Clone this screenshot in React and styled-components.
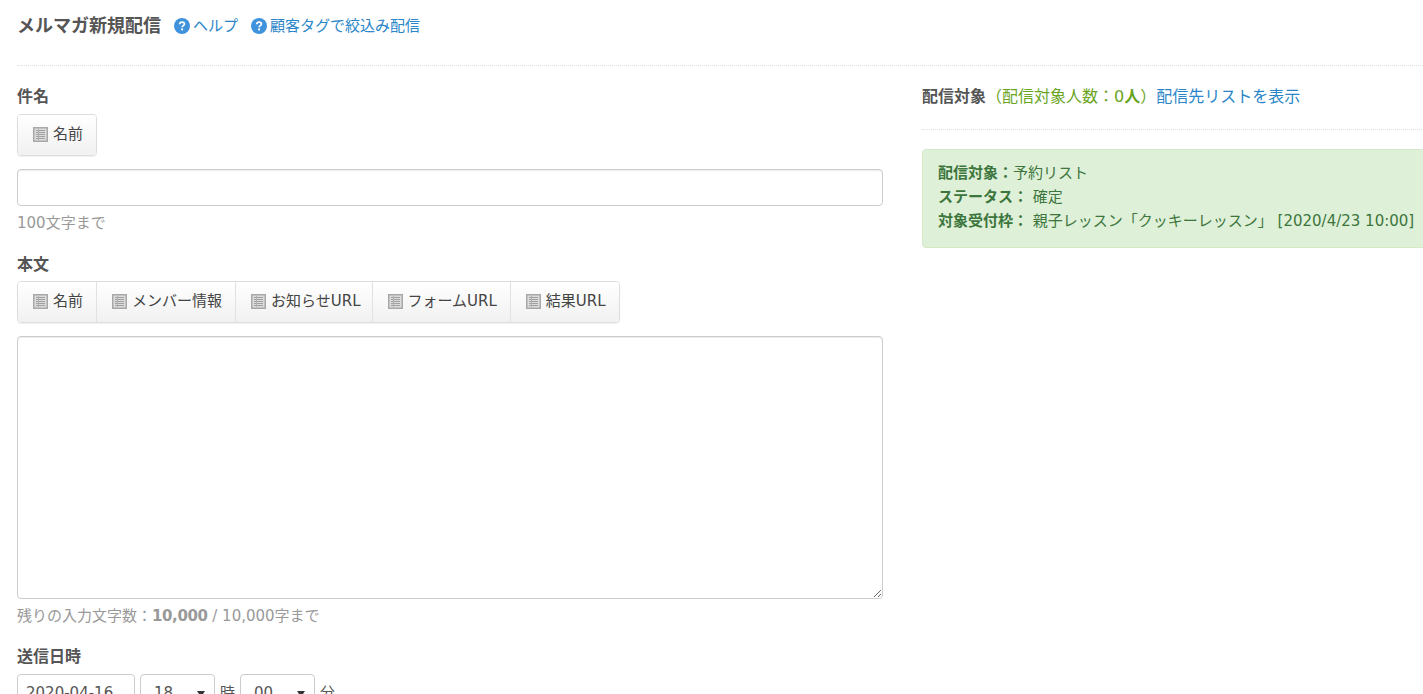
import React from 'react';
import styled, { createGlobalStyle } from 'styled-components';

const GlobalStyle = createGlobalStyle`
  html, body {
    margin: 0;
    padding: 0;
    height: 694px;
    overflow: hidden;
    background: #fff;
    color: #555;
    font-family: "DejaVu Sans", "Noto Sans CJK JP", sans-serif;
    font-size: 15px;
  }
  * { box-sizing: border-box; }
`;

const Page = styled.div`
  width: 1600px;
  padding-left: 17px;
`;

const Header = styled.header`
  display: flex;
  align-items: center;
  height: 66px;
  padding-bottom: 14px;
  width: 1406px;
  border-bottom: 1px dotted #ddd;
`;

const Title = styled.h1`
  margin: 0 13px 0 0;
  font-size: 18px;
  line-height: 24px;
  font-weight: 700;
  color: #555;
`;

const HelpLink = styled.a`
  display: inline-flex;
  align-items: center;
  gap: 3px;
  margin-right: 13px;
  font-size: 15px;
  line-height: 24px;
  color: #2a86c8;
`;

const Columns = styled.div`
  display: flex;
  gap: 39px;
  padding-top: 19px;
`;

const Main = styled.main`
  width: 866px;
  flex: none;
`;

const Side = styled.aside`
  width: 520px;
  flex: none;
`;

const Label = styled.div`
  font-size: 16px;
  line-height: 24px;
  font-weight: 700;
  color: #555;
  margin-top: ${p => p.$top || 0}px;
  margin-bottom: ${p => p.$bottom ?? 5}px;
`;

const BtnGroup = styled.div`
  display: inline-flex;
  border: 1px solid #ddd;
  border-radius: 4px;
  box-shadow: 0 1px 1px rgba(0, 0, 0, 0.06);
  overflow: hidden;
  vertical-align: top;
`;

const InsertBtn = styled.button`
  display: flex;
  align-items: center;
  gap: 5px;
  height: 40px;
  padding: 0 ${p => p.$right ?? 13}px 0 15px;
  border: 0;
  border-left: 1px solid #e2e2e2;
  background: linear-gradient(#fff, #f1f1f1);
  color: #444;
  font: inherit;
  font-size: 15px;
  line-height: 20px;
  &:first-child { border-left: 0; }
`;

const BtnText = styled.span`
  display: block;
  height: 20px;
  line-height: 20px;
  margin-top: -3px;
`;

const ToolRow = styled.div`
  height: 42px;
  margin-bottom: 13px;
`;

const TextInput = styled.input`
  display: block;
  width: 100%;
  height: 37px;
  border: 1px solid #ccc;
  border-radius: 4px;
  box-shadow: inset 0 1px 1px rgba(0, 0, 0, 0.075);
  outline: 0;
`;

const BodyArea = styled.textarea`
  display: block;
  width: 100%;
  height: 263px;
  border: 1px solid #ccc;
  border-radius: 4px;
  box-shadow: inset 0 1px 1px rgba(0, 0, 0, 0.075);
  outline: 0;
`;

const Help = styled.div`
  margin-top: 5px;
  font-size: 15px;
  line-height: 24px;
  color: #999;
  strong { font-weight: 700; letter-spacing: -0.4px; }
`;

const DateRow = styled.div`
  display: flex;
  align-items: flex-start;
  gap: 5px;
  font-size: 15px;
`;

const Field = styled.div`
  display: flex;
  align-items: center;
  justify-content: space-between;
  width: ${p => p.$w}px;
  height: 37px;
  padding: 1px 9px 0 ${p => p.$pad || 13}px;
  border: 1px solid #ccc;
  border-radius: 4px;
  color: #555;
  line-height: 32px;
  font-size: 15px;
  &::after {
    content: ${p => (p.$select ? '""' : 'none')};
    border-left: 4px solid transparent;
    border-right: 4px solid transparent;
    border-top: 6px solid #333;
    margin-top: 1px;
  }
`;

const Unit = styled.span`
  line-height: 38px;
  color: #555;
`;

const SideHead = styled.div`
  display: flex;
  height: 45px;
  font-size: 16px;
  line-height: 24px;
  border-bottom: 1px dotted #ddd;
  strong { font-weight: 700; color: #555; }
`;

const Count = styled.span`
  color: #6aa51f;
  strong { color: #6aa51f; }
`;

const SideLink = styled.a`
  color: #2a86c8;
`;

const Alert = styled.div`
  margin-top: 19px;
  height: 99px;
  padding: 11px 15px;
  background: #dff0d8;
  border: 1px solid #d6e9c6;
  border-radius: 4px;
  color: #3c763d;
  font-size: 15px;
  line-height: 24px;
  strong { font-weight: 700; }
`;

const DocIcon = () => (
  <svg width="15" height="15" viewBox="0 0 15 15" aria-hidden="true" style={{ marginTop: '-2px' }}>
    <rect x="0" y="0" width="15" height="15" fill="#a8a8a8" />
    <rect x="1.5" y="1.5" width="12" height="12" fill="#dcdcdc" />
    <path d="M3 3.5h9M3 5.5h9M3 7.5h9M3 9.5h9M3 11.5h9" stroke="#a0a0a0" strokeWidth="1" />
    <path d="M5.5 2v11" stroke="#b0b0b0" strokeWidth="1" />
  </svg>
);

const QuestionIcon = () => (
  <svg width="16" height="16" viewBox="0 0 16 16" aria-hidden="true">
    <circle cx="8" cy="8" r="8" fill="#3f93dc" />
    <path d="M5.7 6.3c.1-1.4 1-2.1 2.4-2.1s2.3.7 2.3 1.8c0 1.6-2.3 1.6-2.3 3.3" fill="none" stroke="#fff" strokeWidth="1.7" />
    <circle cx="8.1" cy="11.4" r="1.1" fill="#fff" />
  </svg>
);

const InsertButton = ({ children, right }) => (
  <InsertBtn type="button" $right={right}>
    <DocIcon />
    <BtnText>{children}</BtnText>
  </InsertBtn>
);

export default function App() {
  return (
    <>
      <GlobalStyle />
      <Page>
        <Header>
          <Title>メルマガ新規配信</Title>
          <HelpLink><QuestionIcon />ヘルプ</HelpLink>
          <HelpLink><QuestionIcon />顧客タグで絞込み配信</HelpLink>
        </Header>
        <Columns>
          <Main>
            <Label>件名</Label>
            <ToolRow>
              <BtnGroup>
                <InsertButton>名前</InsertButton>
              </BtnGroup>
            </ToolRow>
            <TextInput type="text" />
            <Help>100文字まで</Help>
            <Label $top={18} $bottom={4}>本文</Label>
            <ToolRow>
              <BtnGroup>
                <InsertButton>名前</InsertButton>
                <InsertButton>メンバー情報</InsertButton>
                <InsertButton right={11}>お知らせURL</InsertButton>
                <InsertButton>フォームURL</InsertButton>
                <InsertButton>結果URL</InsertButton>
              </BtnGroup>
            </ToolRow>
            <BodyArea />
            <Help>残りの入力文字数：<strong>10,000</strong> / 10,000字まで</Help>
            <Label $top={17}>送信日時</Label>
            <DateRow>
              <Field $w={118} $pad={8}>2020-04-16</Field>
              <Field $w={75} $select>18</Field>
              <Unit>時</Unit>
              <Field $w={75} $select>00</Field>
              <Unit>分</Unit>
            </DateRow>
          </Main>
          <Side>
            <SideHead>
              <strong>配信対象</strong>
              <Count>（配信対象人数：0<strong>人</strong>）</Count>
              <SideLink>配信先リストを表示</SideLink>
            </SideHead>
            <Alert>
              <div><strong>配信対象：</strong>予約リスト</div>
              <div><strong>ステータス：</strong> 確定</div>
              <div><strong>対象受付枠：</strong> 親子レッスン「クッキーレッスン」 [2020/4/23 10:00]</div>
            </Alert>
          </Side>
        </Columns>
      </Page>
    </>
  );
}
